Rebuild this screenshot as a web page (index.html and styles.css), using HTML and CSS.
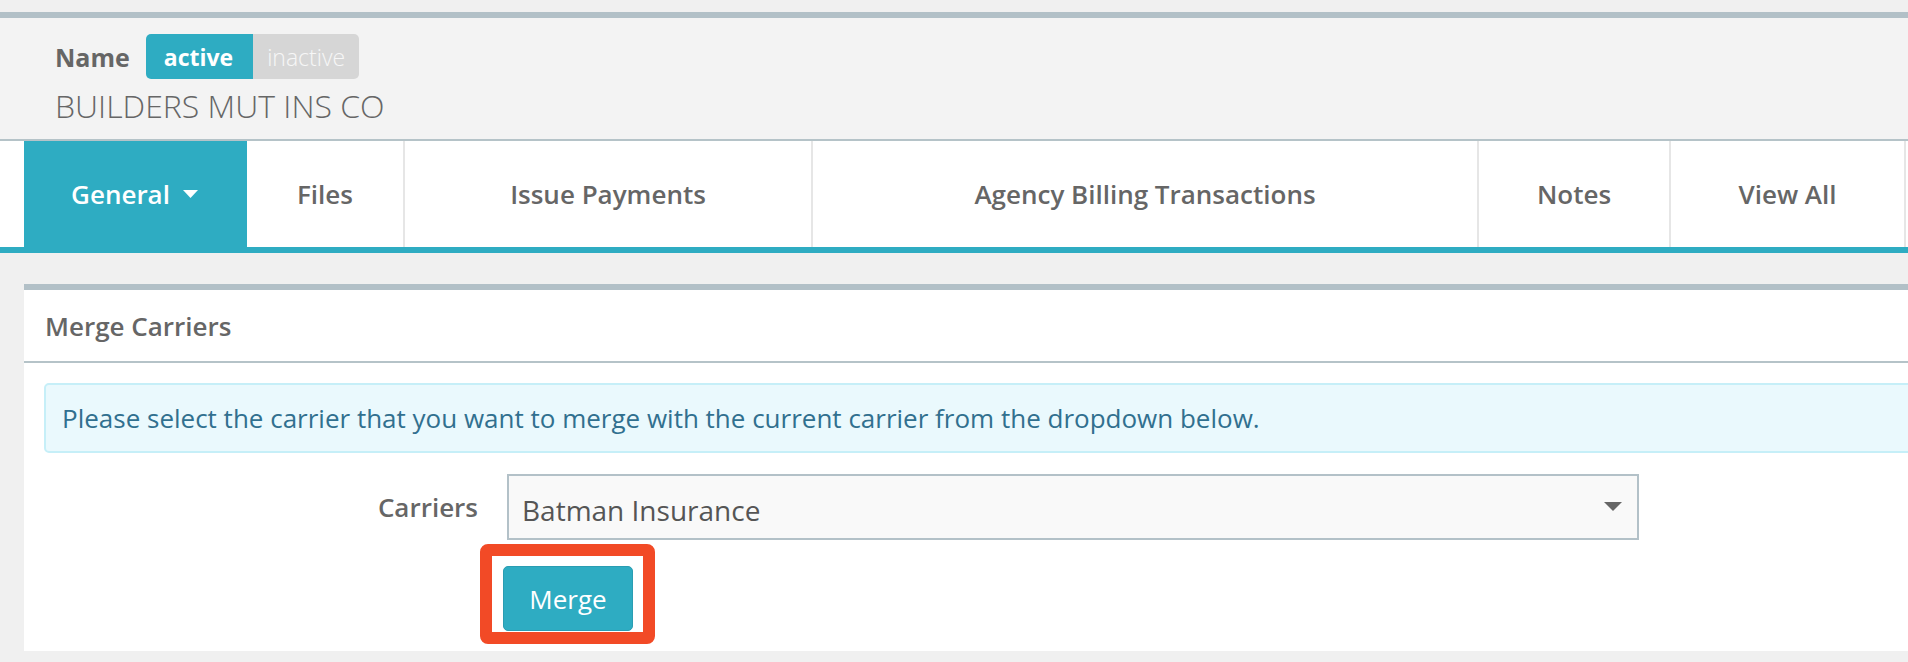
FILE: index.html
```html
<!DOCTYPE html>
<html>
<head>
  <title>Carrier - Merge Carriers</title>
  <link rel="stylesheet" href="styles.css">
</head>
<body>
  <div class="record-header">
    <div class="name-row">
      <span class="name-label">Name</span>
      <span class="status-toggle">
        <span class="status active">active</span>
        <span class="status inactive">inactive</span>
      </span>
    </div>
    <div class="record-name">BUILDERS MUT INS CO</div>
  </div>

  <div class="tab-bar">
    <div class="tabs">
      <a class="tab current" href="#">General
        <svg class="tab-caret" width="15" height="8" viewBox="0 0 15 8"><path d="M0 0h15L7.5 8z" fill="#fff"/></svg>
      </a>
      <a class="tab" href="#">Files</a>
      <a class="tab" href="#">Issue Payments</a>
      <a class="tab" href="#">Agency Billing Transactions</a>
      <a class="tab" href="#">Notes</a>
      <a class="tab" href="#">View All</a>
    </div>
  </div>

  <div class="panel">
    <div class="panel-heading">Merge Carriers</div>
    <div class="panel-body">
      <div class="alert-info">Please select the carrier that you want to merge with the current carrier from the dropdown below.</div>

      <form class="merge-form">
        <div class="form-row">
          <label class="form-label" for="carrier">Carriers</label>
          <div class="select-wrap">
            <select id="carrier" class="carrier-select">
              <option>Batman Insurance</option>
            </select>
            <svg class="select-caret" width="18" height="9" viewBox="0 0 18 9"><path d="M0 0h18L9 9z" fill="#666"/></svg>
          </div>
        </div>
        <div class="button-row">
          <div class="highlight">
            <button type="button" class="btn-merge">Merge</button>
          </div>
        </div>
      </form>
    </div>
  </div>
</body>
</html>
```

FILE: styles.css
```css
body {
  margin: 0;
  background: #f0f0f0;
  font-family: "Open Sans", Arial, sans-serif;
  color: #666;
  overflow-x: hidden;
}

/* record header */
.record-header {
  margin-top: 12px;
  border-top: 6px solid #b2c0c7;
  border-bottom: 2px solid #b5c3c8;
  background: #f3f3f3;
  padding: 16px 0 11px 55px;
}
.name-row {
  display: flex;
  align-items: center;
  height: 45px;
}
.name-label {
  font-size: 25px;
  font-weight: 700;
  margin-right: 16px;
}
.status-toggle {
  display: flex;
  height: 45px;
  border-radius: 5px;
  overflow: hidden;
}
.status {
  display: flex;
  align-items: center;
  font-size: 23px;
}
.status.active {
  background: #2eacc2;
  color: #fff;
  font-weight: 700;
  padding: 0 20px 0 18px;
}
.status.inactive {
  background: #d6d6d6;
  color: #f7f7f7;
  font-weight: 300;
  padding: 0 14px;
}
.record-name {
  font-size: 32px;
  font-weight: 300;
  line-height: 44px;
  margin-top: 5px;
}

/* tabs */
.tab-bar {
  background: #fff;
  border-bottom: 6px solid #2eacc2;
}
.tabs {
  display: grid;
  grid-template-columns: 223px 158px 408px 666px 192px 235px;
  margin-left: 24px;
  height: 106px;
}
.tab {
  display: flex;
  align-items: center;
  justify-content: center;
  border-right: 2px solid #e6e6e6;
  font-size: 26px;
  font-weight: 600;
  color: #666;
  text-decoration: none;
}
.tab.current {
  background: #2eacc2;
  border-right-color: #2eacc2;
  color: #fff;
}
.tab-caret { margin-left: 13px; }

/* panel */
.panel {
  margin: 31px -24px 0 24px;
  border-top: 6px solid #b2c0c7;
  background: #fff;
}
.panel-heading {
  height: 71px;
  display: flex;
  align-items: center;
  padding-left: 21px;
  font-size: 26px;
  font-weight: 600;
  border-bottom: 2px solid #b5c3c8;
}
.panel-body {
  padding: 20px 0 7px;
}
.alert-info {
  margin: 0 20px;
  padding: 15px 16px;
  background: #eaf9fd;
  border: 2px solid #c6eff8;
  border-radius: 5px;
  color: #31708f;
  font-size: 26px;
  line-height: 36px;
}
.form-row {
  display: flex;
  align-items: center;
  margin-top: 21px;
}
.form-label {
  width: 454px;
  padding-right: 29px;
  text-align: right;
  font-size: 26px;
  font-weight: 600;
}
.select-wrap {
  position: relative;
  width: 1132px;
}
.carrier-select {
  appearance: none;
  -webkit-appearance: none;
  width: 100%;
  height: 66px;
  border: 2px solid #b3c1c8;
  border-radius: 0;
  background: #f9f9f9;
  padding: 6px 13px 0;
  font-family: "Open Sans", Arial, sans-serif;
  font-size: 28px;
  color: #555;
}
.select-caret {
  position: absolute;
  right: 17px;
  top: 28px;
}
.button-row {
  padding-left: 456px;
  margin-top: 4px;
}
.highlight {
  display: inline-block;
  border: 12px solid #f24a26;
  border-radius: 8px;
  padding: 10px 10px 1px 11px;
}
.btn-merge {
  display: block;
  width: 130px;
  height: 65px;
  background: #2eacc2;
  border: 1px solid #2a9db2;
  border-radius: 5px;
  color: #fff;
  font-family: "Open Sans", Arial, sans-serif;
  font-size: 26px;
}
```
